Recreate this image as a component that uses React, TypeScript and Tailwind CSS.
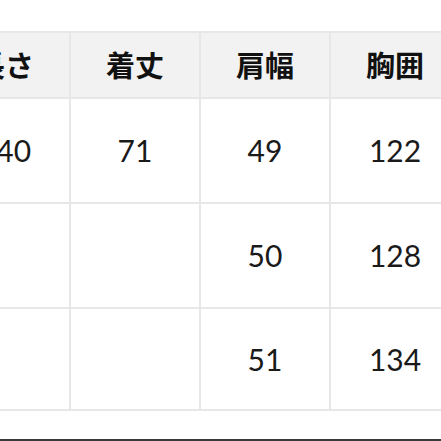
import React from "react";

const headers = ["長さ", "着丈", "肩幅", "胸囲"];

const rows: { h: string; cells: string[] }[] = [
  { h: "h-[105px]", cells: ["140", "71", "49", "122"] },
  { h: "h-[105px]", cells: ["", "", "50", "128"] },
  { h: "h-[102px]", cells: ["", "", "51", "134"] },
];

const App: React.FC = () => {
  return (
    <div className="relative w-[441px] h-[441px] overflow-hidden bg-white">
      <div className="pt-[31px]">
        {/* Size table, first column runs off the left edge */}
        <div className="ml-[-61px] w-max border-t-2 border-l-2 border-[#e7e7e7]">
          <div className="flex">
            {headers.map((t) => (
              <div
                key={t}
                className="w-[130px] h-[66px] flex items-center justify-center border-r-2 border-b-2 border-[#e7e7e7] bg-[#f2f2f2] text-[29px] font-bold text-[#111111] font-['Noto_Sans_CJK_JP',sans-serif]"
              >
                {t}
              </div>
            ))}
          </div>
          {rows.map((r, i) => (
            <div key={i} className="flex">
              {r.cells.map((c, j) => (
                <div
                  key={j}
                  className={`w-[130px] ${r.h} flex items-center justify-center border-r-2 border-b-2 border-[#e7e7e7] text-[30px] text-[#1a1a1a] font-['Lato',sans-serif]`}
                >
                  {c}
                </div>
              ))}
            </div>
          ))}
        </div>
      </div>
      {/* Dark rule at the very bottom */}
      <div className="absolute left-0 right-0 bottom-0 h-[2px] bg-[#3a3a3a]" />
    </div>
  );
};

export default App;
